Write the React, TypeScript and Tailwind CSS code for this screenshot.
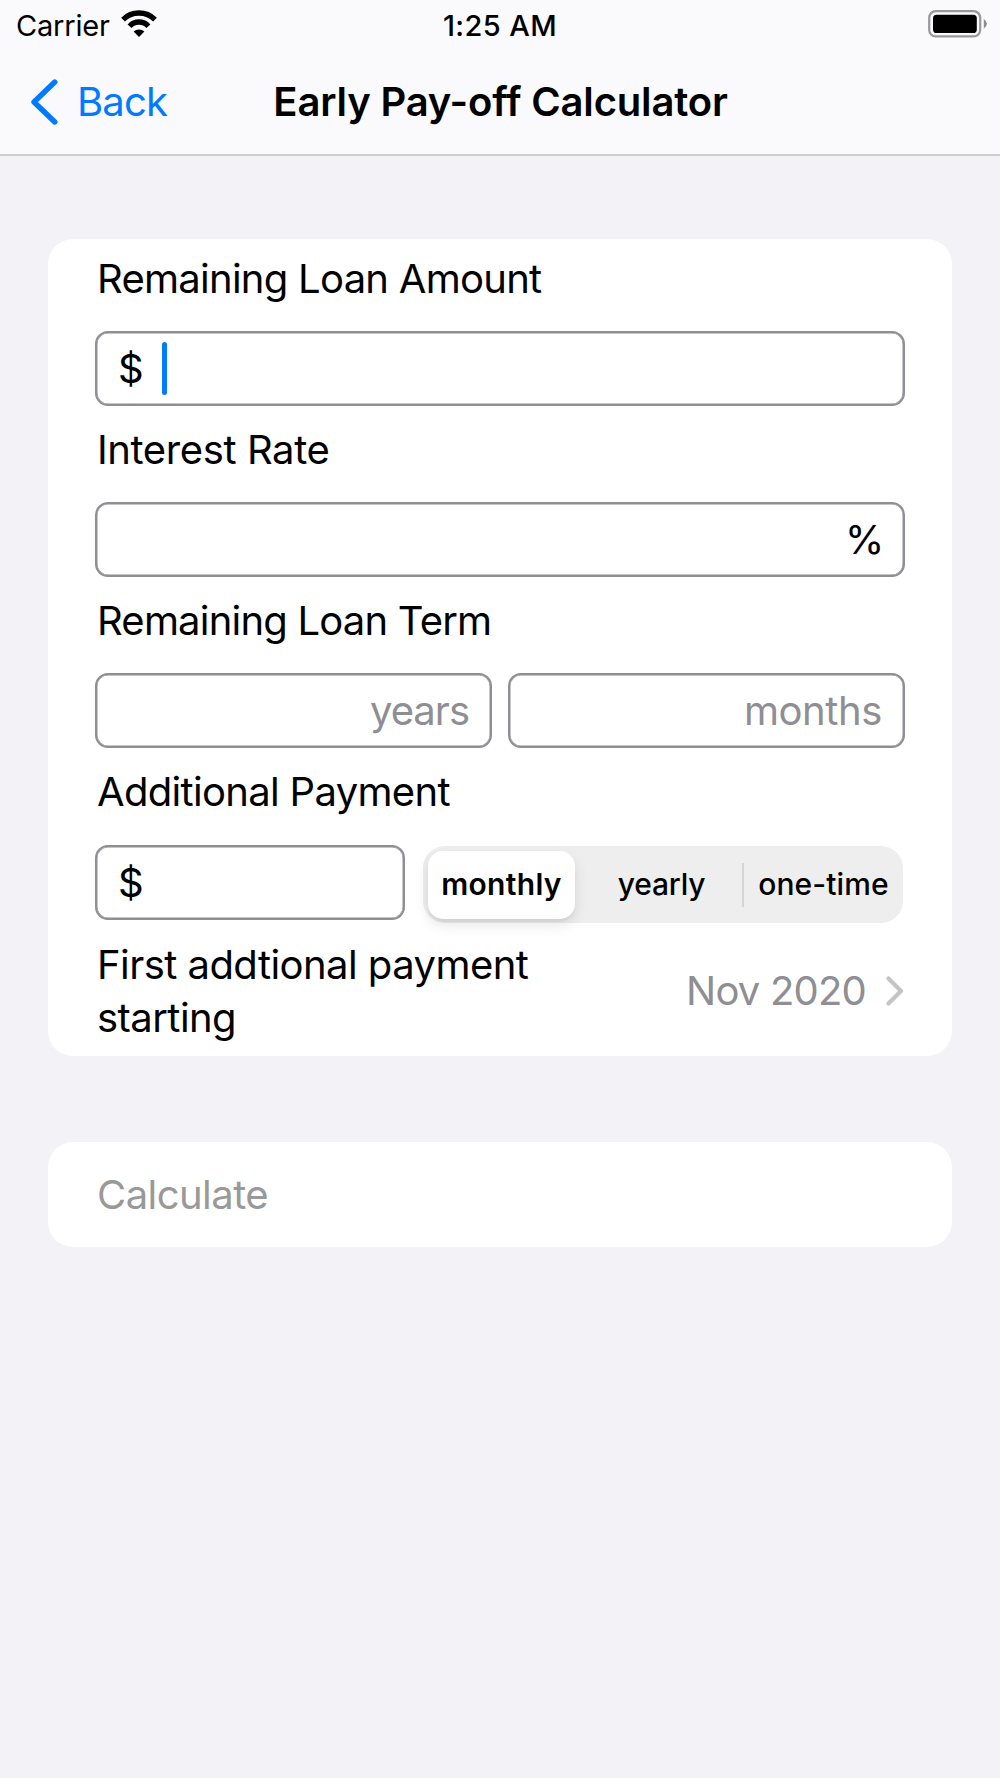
import React, { useState } from 'react';
import clsx from 'clsx';

type Frequency = 'monthly' | 'yearly' | 'one-time';

const WifiIcon = () => (
  <svg width="38" height="28" viewBox="0 0 38 28" fill="none">
    <path d="M3 9.6 A22.7 22.7 0 0 1 35 9.6" stroke="black" strokeWidth="5.4" />
    <path d="M9.6 16.2 A12.6 12.6 0 0 1 28.4 16.2" stroke="black" strokeWidth="5.4" />
    <path d="M19 27 L13.6 21.6 A8 8 0 0 1 24.4 21.6 Z" fill="black" />
  </svg>
);

const BatteryIcon = () => (
  <svg width="60" height="28" viewBox="0 0 60 28" fill="none">
    <rect x="1.2" y="1.2" width="51" height="25.2" rx="6.5" stroke="#98989b" strokeWidth="2.2" />
    <rect x="5" y="4.8" width="43.8" height="18.2" rx="3.6" fill="black" />
    <path d="M55.8 9 Q58.9 11.2 58.9 13.8 Q58.9 16.4 55.8 18.8 Z" fill="#8b8b8e" />
  </svg>
);

const Label = ({ className, children }: { className?: string; children: React.ReactNode }) => (
  <label className={clsx('block h-[53px] pl-[2px] leading-[53px]', className)}>{children}</label>
);

const Field = ({ className, children }: { className?: string; children?: React.ReactNode }) => (
  <div
    className={clsx(
      'flex h-[75px] items-center rounded-[13px] border-2 border-[#8e8e93] px-[21px] shadow-[inset_0_0_0_0.5px_#8e8e93]',
      className
    )}
  >
    {children}
  </div>
);

const StatusBar = () => (
  <div className="grid h-[51px] grid-cols-[1fr_auto_1fr] items-center text-[29px]">
    <div className="flex items-center gap-[10px] pl-4">
      <span className="tracking-[-0.2px]">Carrier</span>
      <span className="-mt-[3px]">
        <WifiIcon />
      </span>
    </div>
    <span className="font-medium tracking-[0.4px]">1:25 AM</span>
    <div className="-mt-[3px] flex justify-end pr-[12px]">
      <BatteryIcon />
    </div>
  </div>
);

const NavBar = () => (
  <div className="grid h-[102px] grid-cols-[1fr_auto_1fr] items-center">
    <button className="flex items-center gap-[19px] pl-[30px] text-[#007aff]">
      <svg width="28" height="46" viewBox="0 0 28 46" fill="none">
        <path d="M24.8 3 L4 23 L24.8 43" stroke="currentColor" strokeWidth="5.4" strokeLinecap="round" strokeLinejoin="round" />
      </svg>
      <span className="tracking-[-0.8px]">Back</span>
    </button>
    <h1 className="pl-px font-semibold tracking-[-0.17px]">Early Pay-off Calculator</h1>
  </div>
);

export default function App() {
  const [frequency, setFrequency] = useState<Frequency>('monthly');

  const segment = (value: Frequency) =>
    clsx(
      'flex h-[68px] w-[147px] items-center justify-center rounded-[15px]',
      frequency === value
        ? 'bg-white font-semibold shadow-[0_6px_14px_rgba(0,0,0,0.1),0_3px_2px_rgba(0,0,0,0.04)]'
        : 'font-medium'
    );

  return (
    <div className="min-h-[1778px] w-[1000px] bg-[#f2f2f7] font-[Inter,sans-serif] text-[40px] tracking-[-0.4px] text-black">
      <header className="h-[156px] border-b-2 border-[#cfcfd2] bg-[#fafafc]">
        <StatusBar />
        <NavBar />
      </header>

      <main className="px-12 pt-[83px]">
        <section className="h-[817px] rounded-[25px] bg-white px-[47px] pt-[13px]">
          <div className="mb-[17px] flex flex-col gap-[26px]">
            <Label className="tracking-[-0.73px]">Remaining Loan Amount</Label>
            <Field>
              <span>$</span>
              <span className="ml-[19px] h-[53px] w-[5px] rounded-full bg-[#007aff]" />
            </Field>
          </div>

          <div className="mb-[17px] flex flex-col gap-[26px]">
            <Label>Interest Rate</Label>
            <Field className="justify-end">
              <span className="-mr-[2px]">%</span>
            </Field>
          </div>

          <div className="mb-[17px] flex flex-col gap-[26px]">
            <Label className="tracking-[-0.8px]">Remaining Loan Term</Label>
            <div className="flex gap-4">
              <Field className="flex-1 justify-end tracking-[-1px] text-[#8e8e93]">years</Field>
              <Field className="flex-1 justify-end text-[#8e8e93]">months</Field>
            </div>
          </div>

          <div className="flex flex-col gap-[27px]">
            <Label className="tracking-[-0.68px]">Additional Payment</Label>
            <div className="flex items-start justify-between pr-[2px]">
              <Field className="w-[310px]">$</Field>
              <div className="mt-px flex h-[77px] w-[480px] items-center rounded-[22px] bg-[#eeeeee] px-[5px] text-[30px]">
                <button className={clsx(segment('monthly'), 'tracking-[0.3px]')} onClick={() => setFrequency('monthly')}>
                  monthly
                </button>
                <button className={clsx(segment('yearly'), 'ml-[13px] tracking-[-0.2px]')} onClick={() => setFrequency('yearly')}>
                  yearly
                </button>
                <span className="ml-[7px] h-[44px] w-[2px] bg-[#d5d5d7]" />
                <button className={clsx(segment('one-time'), 'ml-[6px] tracking-[0.1px]')} onClick={() => setFrequency('one-time')}>
                  one-time
                </button>
              </div>
            </div>
          </div>

          <div className="mt-[15px] flex items-center justify-between pr-px">
            <p className="w-[460px] pl-[2px] leading-[53px] tracking-[-0.55px]">First addtional payment starting</p>
            <div className="flex items-center gap-[19px] text-[#8e8e93]">
              <span className="tracking-[-0.8px]">Nov 2020</span>
              <svg width="19" height="30" viewBox="0 0 19 30" fill="none">
                <path d="M3.5 2.5 L16 15 L3.5 27.5" stroke="#c4c4c6" strokeWidth="4.2" strokeLinecap="round" strokeLinejoin="round" />
              </svg>
            </div>
          </div>
        </section>

        <button className="mt-[86px] flex h-[105px] w-full items-center rounded-[25px] bg-white px-[49px] tracking-[-0.55px] text-[#999999]">
          Calculate
        </button>
      </main>
    </div>
  );
}
